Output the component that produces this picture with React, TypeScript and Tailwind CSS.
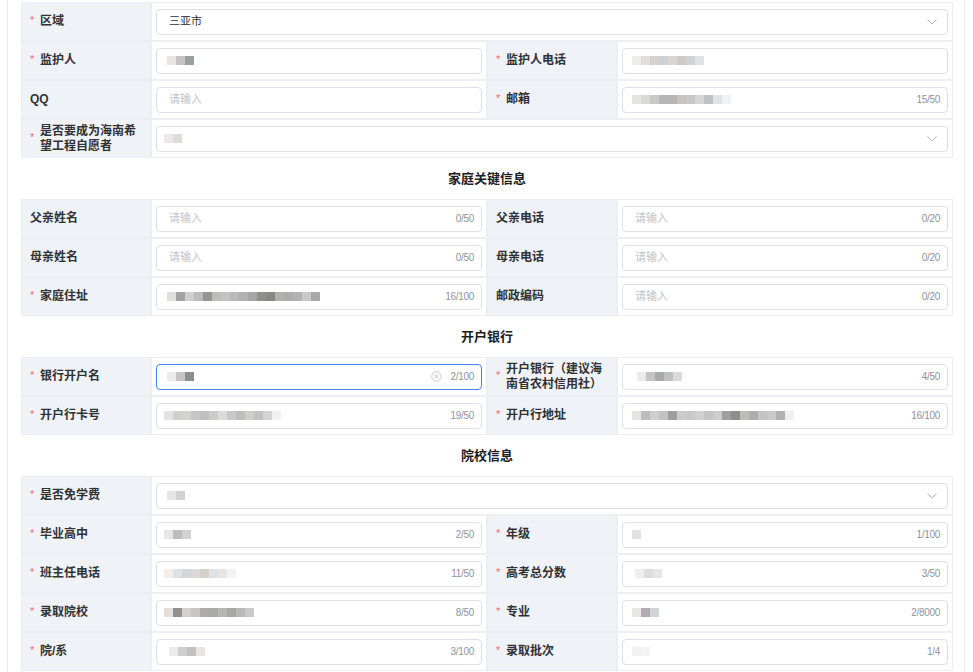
import React from "react";

type Cell = {
  label: string;
  required?: boolean;
  value?: React.ReactNode;
  placeholder?: string;
  count?: string;
  select?: boolean;
  focused?: boolean;
};

type Row = { kind: "pair"; cells: [Cell, Cell] } | { kind: "full"; cell: Cell } | { kind: "title"; text: string };

function Mosaic({ shades, lead = 0 }: { shades: string[]; lead?: number }) {
  return (
    <span className="flex items-center" style={{ marginLeft: lead }}>
      {shades.map((c, i) => (
        <span key={i} className="h-[9px] w-[9px]" style={{ backgroundColor: c }} />
      ))}
    </span>
  );
}

const m = (s: string, lead = 0) => <Mosaic shades={s.split(" ")} lead={lead} />;

function Chevron() {
  return (
    <svg width="10" height="6" viewBox="0 0 10 6" fill="none" className="mr-[3px]">
      <path d="M0.5 0.5L5 5L9.5 0.5" stroke="#b4b8c0" strokeWidth="1" />
    </svg>
  );
}

function ClearIcon() {
  return (
    <svg width="11" height="11" viewBox="0 0 12 12" fill="none" className="mr-[8px]">
      <circle cx="6" cy="6" r="5.2" stroke="#c0c4cc" strokeWidth="1" />
      <path d="M4 4L8 8M8 4L4 8" stroke="#c0c4cc" strokeWidth="1" />
    </svg>
  );
}

function Label({ cell }: { cell: Cell }) {
  return (
    <div className="flex items-center border border-[#eceef2] bg-[#eff2f6] pl-[8px] pr-[6px]">
      {cell.required && (
        <span className="w-[10px] shrink-0 -translate-y-[1px] text-[11px] text-[#f56c6c]">*</span>
      )}
      <span className="text-[12px] leading-[15px] font-semibold text-[#303133]">{cell.label}</span>
    </div>
  );
}

function Field({ cell, wide }: { cell: Cell; wide?: boolean }) {
  return (
    <div className={`flex items-center border border-[#eceef2] bg-white px-[4px] ${wide ? "col-span-3" : ""}`}>
      <div
        className={`flex h-[26px] w-full items-center rounded-[4px] border bg-white pl-[12px] pr-[7px] ${
          cell.focused ? "border-[#3f83f0]" : "border-[#dcdfe6]"
        }`}
      >
        <div className="flex-1 text-[11px] text-[#303133]">
          {cell.value ?? <span className="text-[#c0c4cc]">{cell.placeholder}</span>}
        </div>
        {cell.focused && <ClearIcon />}
        {cell.count && <span className="text-[10px] tracking-[-0.3px] text-[#909399]">{cell.count}</span>}
        {cell.select && <Chevron />}
      </div>
    </div>
  );
}

const rows: Row[] = [
  { kind: "full", cell: { label: "区域", required: true, value: "三亚市", select: true } },
  {
    kind: "pair",
    cells: [
      { label: "监护人", required: true, value: m("#e7e5e3 #c6c4c2 #9c9fa0", -2) },
      { label: "监护人电话", required: true, value: m("#eeedec #e0dfde #d4d2d1 #cfd0d2 #d8d6d5 #cbcbcb #d1d1d1 #dfe2e5", -3) },
    ],
  },
  {
    kind: "pair",
    cells: [
      { label: "QQ", placeholder: "请输入" },
      {
        label: "邮箱",
        required: true,
        value: m("#e6e4e2 #d9d9d7 #c9c9c9 #b6b6b6 #b8b7b6 #c4c4c4 #c9c9c9 #d6d6d6 #c0c0c0 #dfe3e6 #f0f1f2", -3),
        count: "15/50",
      },
    ],
  },
  { kind: "full", cell: { label: "是否要成为海南希望工程自愿者", required: true, value: m("#ebe9e8 #dddbda", -5), select: true } },
  { kind: "title", text: "家庭关键信息" },
  {
    kind: "pair",
    cells: [
      { label: "父亲姓名", placeholder: "请输入", count: "0/50" },
      { label: "父亲电话", placeholder: "请输入", count: "0/20" },
    ],
  },
  {
    kind: "pair",
    cells: [
      { label: "母亲姓名", placeholder: "请输入", count: "0/50" },
      { label: "母亲电话", placeholder: "请输入", count: "0/20" },
    ],
  },
  {
    kind: "pair",
    cells: [
      {
        label: "家庭住址",
        required: true,
        value: m("#e2dfdc #a3a3a3 #cfcfcf #bcbcbc #959592 #bdbdbd #c3c3c3 #b9b9b9 #b1b1b1 #a6a6a6 #8e8e8b #878784 #b2b1b0 #aeadad #b3b3b3 #c9c9cb #a8a8a8", -2),
        count: "16/100",
      },
      { label: "邮政编码", placeholder: "请输入", count: "0/20" },
    ],
  },
  { kind: "title", text: "开户银行" },
  {
    kind: "pair",
    cells: [
      { label: "银行开户名", required: true, value: m("#ecebea #c6c4c3 #8c8f8f", -2), count: "2/100", focused: true },
      { label: "开户银行（建议海南省农村信用社）", required: true, value: m("#ecebea #c4c4c4 #a8aaab #c0c0c0 #dadada", 2), count: "4/50" },
    ],
  },
  {
    kind: "pair",
    cells: [
      {
        label: "开户行卡号",
        required: true,
        value: m("#e3e3e3 #cfcfcf #d4d1d0 #c6c6c6 #c0c0c1 #cbcbcb #dbdbd7 #c8c8c8 #c2bdbb #cdcdcd #c2c2c2 #d4d4d6 #f1f1f1", -5),
        count: "19/50",
      },
      {
        label: "开户行地址",
        required: true,
        value: m("#e6e3e1 #bcbcbc #cfcfcf #c3c3c3 #9e9e9e #cbcbcb #c8c8c8 #d0d0d0 #c4c4c4 #cdcdcd #9d9fa2 #8d8d89 #bcbcbc #adadad #c3c3c3 #c9c9cb #b1b1b1 #f0f0f0", -3),
        count: "16/100",
      },
    ],
  },
  { kind: "title", text: "院校信息" },
  { kind: "full", cell: { label: "是否免学费", required: true, value: m("#e8e6e5 #d3d1d1", -2), select: true } },
  {
    kind: "pair",
    cells: [
      { label: "毕业高中", required: true, value: m("#e8e6e4 #bdbdbd #d2d2d2", -5), count: "2/50" },
      { label: "年级", required: true, value: m("#e3e1e1", -3), count: "1/100" },
    ],
  },
  {
    kind: "pair",
    cells: [
      { label: "班主任电话", required: true, value: m("#f0efee #dfe0e1 #d6d6d6 #dadada #d5d0cc #dfe2e5 #e6e6e6 #f2f2f2", -5), count: "11/50" },
      { label: "高考总分数", required: true, value: m("#eeeeee #dcdcdc #e6e6e6", 0), count: "3/50" },
    ],
  },
  {
    kind: "pair",
    cells: [
      {
        label: "录取院校",
        required: true,
        value: m("#e2e0df #8f9090 #d4d0cf #c8c6c5 #acaba8 #a9a9a7 #b6b6b5 #a9a8a8 #b8b8b8 #c9c9c9", -5),
        count: "8/50",
      },
      { label: "专业", required: true, value: m("#e8e7e6 #b1adae #d1d5d6", -3), count: "2/8000" },
    ],
  },
  {
    kind: "pair",
    cells: [
      { label: "院/系", required: true, value: m("#ebebeb #cfcfcf #c4c2c1 #e6e6e6", 0), count: "3/100" },
      { label: "录取批次", required: true, value: m("#f1f1f1 #f3f3f3", -3), count: "1/4" },
    ],
  },
];

export default function App() {
  return (
    <div className="h-[672px] overflow-hidden bg-white font-['Liberation_Sans','Noto_Sans_CJK_SC',sans-serif]">
      <div className="ml-[7px] h-full w-[958px] border-x border-[#e8eaee] pl-[13px] pr-[11px] pt-[2px]">
        {rows.map((row, i) => {
          if (row.kind === "title") {
            return (
              <div key={i} className="flex h-[41px] items-center justify-center text-[13px] font-bold text-[#1d1d1f]">
                {row.text}
              </div>
            );
          }
          return (
            <div key={i} className="grid h-[39px] grid-cols-[130px_336px_130px_336px]">
              {row.kind === "full" ? (
                <>
                  <Label cell={row.cell} />
                  <Field cell={row.cell} wide />
                </>
              ) : (
                <>
                  <Label cell={row.cells[0]} />
                  <Field cell={row.cells[0]} />
                  <Label cell={row.cells[1]} />
                  <Field cell={row.cells[1]} />
                </>
              )}
            </div>
          );
        })}
      </div>
    </div>
  );
}
